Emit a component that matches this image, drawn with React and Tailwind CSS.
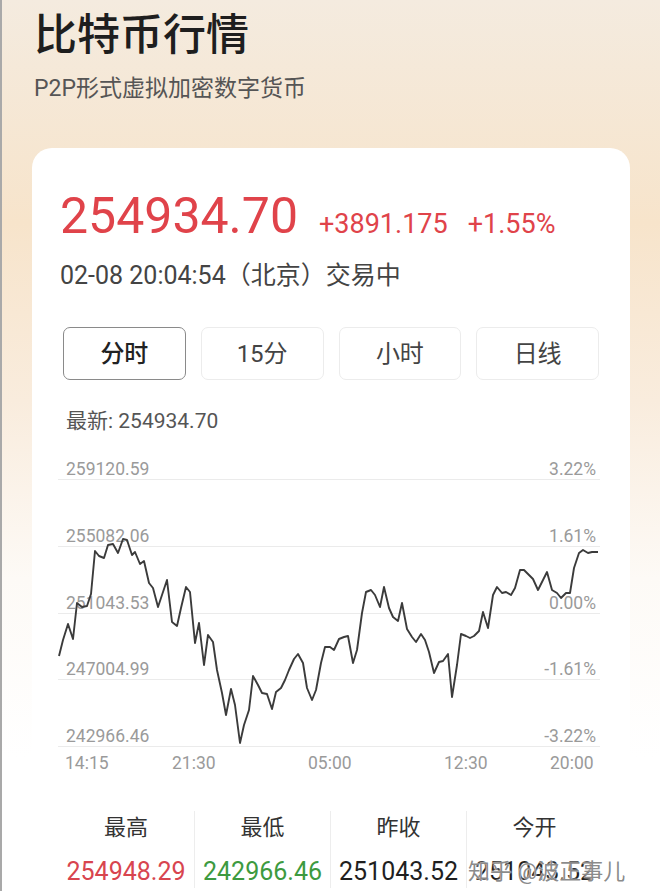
import React from "react";

const font = "font-['Roboto','Noto_Sans_CJK_SC',sans-serif]";

const tabs = ["分时", "15分", "小时", "日线"];

const rows = [
  { left: "259120.59", right: "3.22%", h: "h-[30px]" },
  { left: "255082.06", right: "1.61%", h: "h-[67px]" },
  { left: "251043.53", right: "0.00%", h: "h-[67px]" },
  { left: "247004.99", right: "-1.61%", h: "h-[66px]" },
  { left: "242966.46", right: "-3.22%", h: "h-[67px]" },
];

const times = ["14:15", "21:30", "05:00", "12:30", "20:00"];

const stats = [
  { title: "最高", value: "254948.29", color: "text-[#d8454f]" },
  { title: "最低", value: "242966.46", color: "text-[#3d9a3f]" },
  { title: "昨收", value: "251043.52", color: "text-[#1f1f1f]" },
  { title: "今开", value: "251043.52", color: "text-[#1f1f1f]" },
];

// traced from the intraday chart, in page coordinates
const line = [
  [59, 656], [63, 640], [68, 624], [73, 639], [77, 603], [82, 607], [87, 606], [91, 594],
  [95, 551], [99, 556], [104, 558], [108, 545], [113, 544], [118, 553], [123, 539], [127, 540],
  [132, 555], [135, 552], [140, 564], [144, 561], [149, 583], [153, 588], [158, 607], [163, 592],
  [167, 580], [172, 622], [177, 626], [181, 608], [186, 587], [190, 592], [195, 643], [199, 623],
  [204, 665], [208, 635], [213, 642], [217, 670], [222, 693], [226, 715], [231, 689], [235, 705],
  [240, 743], [244, 725], [249, 710], [253, 676], [258, 685], [262, 693], [267, 694], [272, 709],
  [276, 692], [281, 688], [285, 680], [289, 670], [294, 659], [298, 654], [303, 663], [307, 688],
  [312, 700], [316, 690], [321, 663], [325, 647], [330, 647], [334, 650], [339, 639], [344, 637],
  [348, 636], [353, 663], [357, 650], [362, 613], [366, 592], [371, 590], [375, 595], [380, 607],
  [384, 587], [389, 608], [393, 617], [398, 621], [402, 603], [407, 629], [412, 637], [416, 642],
  [421, 634], [425, 640], [429, 652], [434, 673], [439, 662], [443, 661], [448, 654], [452, 697],
  [457, 665], [461, 634], [466, 636], [470, 638], [474, 636], [479, 631], [483, 612], [488, 628],
  [493, 595], [497, 587], [502, 593], [506, 592], [511, 595], [515, 588], [520, 570], [524, 570],
  [529, 575], [533, 579], [538, 590], [543, 580], [547, 572], [552, 590], [557, 593], [561, 598],
  [566, 593], [570, 593], [574, 568], [579, 553], [583, 550], [588, 553], [592, 552], [598, 552],
];

export default function App() {
  return (
    <div className={`${font} relative h-[891px] w-[660px] overflow-hidden border-l-2 border-[#a9a9a9] bg-[linear-gradient(180deg,#f4ebdf_0%,#f7e4cb_25%,#f9ecdd_45%,#fdfaf6_65%,#ffffff_85%)]`}>
      <div className="pl-[32px] pt-[9px]">
        <h1 className="text-[43px] font-medium leading-[52px] text-[#1e1e1e]">比特币行情</h1>
        <p className="mt-[13px] text-[23px] leading-[30px] text-[#555]">P2P形式虚拟加密数字货币</p>
      </div>

      <div className="mx-[30px] mt-[44px] h-[760px] rounded-[20px] bg-white px-[28px] pt-[40px]">
        <div className="flex items-baseline leading-[56px]">
          <span className="text-[50px] text-[#e0434a]">254934.70</span>
          <span className="ml-[21px] text-[27px] text-[#e0434a]">+3891.175</span>
          <span className="ml-[20px] text-[27px] text-[#e0434a]">+1.55%</span>
        </div>
        <p className="mt-[8px] text-[25px] leading-[32px] text-[#444]">02-08 20:04:54（北京）交易中</p>

        <div className="mt-[35px] grid grid-cols-4 gap-[15px] px-[3px]">
          {tabs.map((tab, i) => (
            <button
              key={tab}
              className={`flex h-[53px] items-center justify-center rounded-[7px] text-[24px] ${
                i === 0 ? "border-[1.5px] border-[#8a8a8a] font-medium text-[#222]" : "border-[1.5px] border-[#ececec] text-[#444]"
              }`}
            >
              {tab}
            </button>
          ))}
        </div>

        <p className="mt-[27px] pl-[6px] text-[21px] leading-[28px] text-[#555]">最新: 254934.70</p>

        <Chart />

        <div className="-ml-[2px] mt-[6px] grid w-[544px] grid-cols-[107px_136px_136px_106px_1fr] pl-[7px] text-[17.5px] leading-[20px] text-[#9a9a9a]">
          {times.map((t) => <span key={t}>{t}</span>)}
        </div>

        <div className="relative -ml-[2px] mt-[38px] grid w-[544px] grid-cols-4">
          {stats.map((s, i) => (
            <div key={s.title} className={`flex flex-col items-center pt-[2px] ${i > 0 ? "border-l border-[#ededed]" : ""}`}>
              <span className="text-[22px] leading-[30px] text-[#333]">{s.title}</span>
              <span className={`mt-[13px] text-[25px] leading-[32px] ${s.color}`}>{s.value}</span>
            </div>
          ))}
          <span className="absolute left-[410px] top-[46px] whitespace-nowrap text-[22px] leading-[30px] text-[#6b6b6b]/80 [text-shadow:0_0_2px_#fff,0_0_1px_#fff]">
            知乎 @波正事儿
          </span>
        </div>
      </div>
    </div>
  );
}

function Chart() {
  return (
    <div className="relative -ml-[2px] mt-[15px] w-[542px]">
      {rows.map((r) => (
        <div key={r.left} className={`flex items-end justify-between border-b border-[#ebebeb] pl-[8px] pr-[4px] text-[17.5px] leading-[20px] text-[#9a9a9a] ${r.h}`}>
          <span>{r.left}</span>
          <span>{r.right}</span>
        </div>
      ))}
      <svg className="absolute inset-0" width="542" height="297" viewBox="58 450 542 297">
        <polyline
          points={line.map((p) => p.join(",")).join(" ")}
          fill="none"
          stroke="#3b3b3b"
          strokeWidth="1.9"
          strokeLinejoin="round"
        />
      </svg>
    </div>
  );
}
